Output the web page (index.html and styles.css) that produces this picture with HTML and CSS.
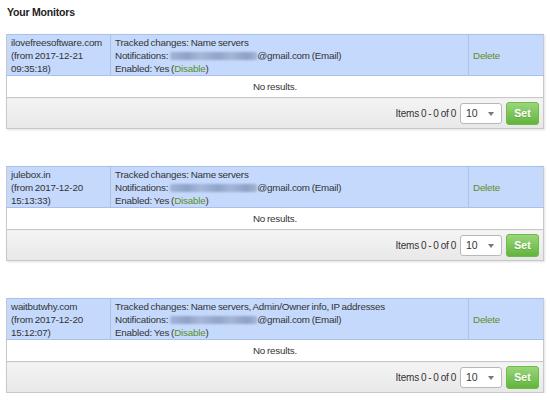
FILE: index.html
```html
<!DOCTYPE html>
<html>
<head>
<meta charset="utf-8">
<link rel="stylesheet" href="styles.css">
</head>
<body>
<h1 class="title">Your Monitors</h1>

<table class="monitor">
  <tr class="head">
    <td class="c-domain">ilovefreesoftware.com<br>(from 2017-12-21<br>09:35:18)</td>
    <td class="c-info">Tracked changes: Name servers<br>Notifications: <span class="redact"></span>@gmail.com (Email)<br>Enabled: Yes (<a class="green">Disable</a>)</td>
    <td class="c-del"><a class="green">Delete</a></td>
  </tr>
  <tr class="empty"><td colspan="3">No results.</td></tr>
  <tr class="foot"><td colspan="3"><div class="pager"><span>Items 0 - 0 of 0</span><span class="select">10<span class="arrow"></span></span><button class="set">Set</button></div></td></tr>
</table>

<table class="monitor">
  <tr class="head">
    <td class="c-domain">julebox.in<br>(from 2017-12-20<br>15:13:33)</td>
    <td class="c-info">Tracked changes: Name servers<br>Notifications: <span class="redact"></span>@gmail.com (Email)<br>Enabled: Yes (<a class="green">Disable</a>)</td>
    <td class="c-del"><a class="green">Delete</a></td>
  </tr>
  <tr class="empty"><td colspan="3">No results.</td></tr>
  <tr class="foot"><td colspan="3"><div class="pager"><span>Items 0 - 0 of 0</span><span class="select">10<span class="arrow"></span></span><button class="set">Set</button></div></td></tr>
</table>

<table class="monitor">
  <tr class="head">
    <td class="c-domain">waitbutwhy.com<br>(from 2017-12-20<br>15:12:07)</td>
    <td class="c-info">Tracked changes: Name servers, Admin/Owner info, IP addresses<br>Notifications: <span class="redact"></span>@gmail.com (Email)<br>Enabled: Yes (<a class="green">Disable</a>)</td>
    <td class="c-del"><a class="green">Delete</a></td>
  </tr>
  <tr class="empty"><td colspan="3">No results.</td></tr>
  <tr class="foot"><td colspan="3"><div class="pager"><span>Items 0 - 0 of 0</span><span class="select">10<span class="arrow"></span></span><button class="set">Set</button></div></td></tr>
</table>
</body>
</html>
```

FILE: styles.css
```css
html, body {
  margin: 0;
  padding: 0;
  background: #ffffff;
}
body {
  padding: 5px 6px 0 6px;
  font-family: "Liberation Sans", Arial, sans-serif;
  font-size: 9.8px;
  letter-spacing: -0.2px;
  word-spacing: -0.6px;
  color: #333333;
}
.title {
  font-size: 10.5px;
  font-weight: bold;
  letter-spacing: -0.2px;
  word-spacing: 0;
  color: #222222;
  margin: 0 0 15px 1px;
  line-height: 14px;
}
.monitor {
  width: 538px;
  border-collapse: collapse;
  border: 1px solid #c8c8c8;
  box-shadow: 1px 1px 2px rgba(0,0,0,0.12);
  margin-bottom: 37px;
}
.monitor:last-child {
  margin-bottom: 0;
}
.monitor td {
  padding: 0;
}
.head td {
  background: #c5d9fd;
  border-top: 1px solid #a8c0ee;
  border-bottom: 1px solid #a8c0ee;
  line-height: 13px;
  padding: 1px 4px 0 4px;
  vertical-align: middle;
}
.head td + td {
  border-left: 1px solid #aac3ee;
}
.c-domain { width: 95px; }
.c-del { width: 66px; }
.green {
  color: #5c8f22;
  text-decoration: none;
}
.redact {
  display: inline-block;
  width: 87px;
  height: 8px;
  vertical-align: -1px;
  border-radius: 2px;
  background: linear-gradient(90deg, #a3b5d6 0%, #8fa3c8 20%, #a7b8d8 35%, #91a5c9 55%, #a5b6d7 70%, #8ea2c7 88%, #a3b5d6 100%);
  filter: blur(1px);
}
.empty td {
  background: #ffffff;
  text-align: center;
  height: 21px;
  border-bottom: 1px solid #c8c8c8;
}
.foot td {
  background: linear-gradient(#f4f4f4, #e8e8e8);
  height: 30px;
}
.pager {
  display: flex;
  justify-content: flex-end;
  align-items: center;
  gap: 4px;
  padding-right: 4px;
  font-size: 10px;
  color: #333;
}
.select {
  position: relative;
  box-sizing: border-box;
  width: 42px;
  height: 21px;
  border: 1px solid #b8b8b8;
  border-radius: 3px;
  background: #ffffff;
  padding-left: 5px;
  line-height: 19px;
  font-size: 10.5px;
}
.arrow {
  position: absolute;
  right: 7px;
  top: 8px;
  border-left: 3px solid transparent;
  border-right: 3px solid transparent;
  border-top: 4px solid #777;
}
.set {
  box-sizing: border-box;
  width: 33px;
  height: 23px;
  border: 1px solid #6fbb4a;
  border-radius: 3px;
  background: linear-gradient(#9ad67a, #62b43d);
  color: #ffffff;
  font-family: "Liberation Sans", Arial, sans-serif;
  font-size: 10.5px;
  font-weight: bold;
  padding: 0;
  text-shadow: 0 1px 0 rgba(0,0,0,0.15);
}
```
